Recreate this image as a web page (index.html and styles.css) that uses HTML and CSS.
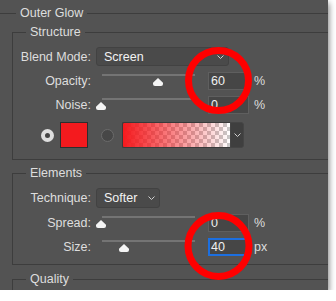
FILE: index.html
```html
<!DOCTYPE html>
<html lang="en">
<head>
  <meta charset="UTF-8" />
  <meta name="viewport" content="width=device-width, initial-scale=1.0" />
  <title>Outer Glow</title>
  <link rel="stylesheet" href="styles.css">
</head>
<body>

  <div class="panel">
    <fieldset class="outer">
      <legend>Outer Glow</legend>

      <fieldset class="group structure">
        <legend>Structure</legend>

        <div class="row select-row">
          <span class="label">Blend Mode:</span>
          <div class="select blend">
            <span>Screen</span>
            <svg class="chevron" width="7" height="4" viewBox="0 0 7 4"><polyline points="0.5,0.5 3.5,3.5 6.5,0.5" /></svg>
          </div>
        </div>

        <div class="row">
          <span class="label">Opacity:</span>
          <div class="slider"><span class="thumb" style="left: 51px"></span></div>
          <div class="num">60</div>
          <span class="unit">%</span>
        </div>

        <div class="row">
          <span class="label">Noise:</span>
          <div class="slider"><span class="thumb" style="left: -6px"></span></div>
          <div class="num">0</div>
          <span class="unit">%</span>
        </div>

        <div class="color-row">
          <span class="radio checked"></span>
          <span class="swatch"></span>
          <span class="radio"></span>
          <div class="gradient">
            <span class="ramp"></span>
            <span class="ramp-btn">
              <svg class="chevron" width="7" height="4" viewBox="0 0 7 4"><polyline points="0.5,0.5 3.5,3.5 6.5,0.5" /></svg>
            </span>
          </div>
        </div>
      </fieldset>

      <fieldset class="group elements">
        <legend>Elements</legend>

        <div class="row select-row">
          <span class="label">Technique:</span>
          <div class="select technique">
            <span>Softer</span>
            <svg class="chevron" width="7" height="4" viewBox="0 0 7 4"><polyline points="0.5,0.5 3.5,3.5 6.5,0.5" /></svg>
          </div>
        </div>

        <div class="row">
          <span class="label">Spread:</span>
          <div class="slider"><span class="thumb" style="left: -6px"></span></div>
          <div class="num">0</div>
          <span class="unit">%</span>
        </div>

        <div class="row">
          <span class="label">Size:</span>
          <div class="slider"><span class="thumb" style="left: 17px"></span></div>
          <div class="num focus">40</div>
          <span class="unit">px</span>
        </div>
      </fieldset>

      <fieldset class="group quality">
        <legend>Quality</legend>
      </fieldset>
    </fieldset>
  </div>

  <!-- red markers drawn over the settings -->
  <svg class="marks" width="336" height="301" viewBox="0 0 336 301">
    <circle cx="218.5" cy="80.5" r="30" />
    <circle cx="218.5" cy="246" r="30.5" />
  </svg>

</body>
</html>
```

FILE: styles.css
```css
:root {
  --panel: #535353;
  --line: #3d3d3d;
  --text: #dedede;
  --field: #464646;
}

body {
  margin: 0;
  position: relative;
  background-color: #fff;
  font-family: "Liberation Sans", Arial, sans-serif;
  font-size: 12.5px;
  color: var(--text);
}

.panel {
  width: 328px;
  height: 290px;
  box-sizing: border-box;
  padding-top: 6px;
  background-color: var(--panel);
  overflow: hidden;
  box-shadow: 1px 3px 6px rgba(0, 0, 0, 0.5);
}

fieldset {
  margin: 0;
  padding: 0;
  min-width: 0;
  border: 1px solid var(--line);
}

legend {
  padding: 0 4px;
  line-height: 14px;
}

.outer {
  margin: 0 -10px;
}

.outer > legend {
  margin-left: 25px;
}

.group {
  margin: 5px -20px 0 21px;
  padding: 8px 0 11px;
}

.group > legend {
  margin-left: 13px;
}

.elements {
  margin-top: 6px;
  padding-bottom: 8px;
}

.quality {
  margin-top: 7px;
  height: 40px;
}

.row {
  display: flex;
  align-items: center;
  height: 18px;
  margin-top: 6px;
}

.select-row {
  margin-top: 0;
  height: 19px;
}

.elements .select-row {
  height: 20px;
}

.label {
  width: 78px;
  margin-right: 5px;
  text-align: right;
}

.select {
  display: flex;
  align-items: center;
  justify-content: space-between;
  height: 100%;
  box-sizing: border-box;
  padding: 0 4px 0 7px;
  border: 1px solid #424242;
  border-radius: 3px;
  background-color: #4a4a4a;
  color: #f2f2f2;
}

.blend { width: 133px; }
.technique { width: 64px; }

.chevron {
  fill: none;
  stroke: #cfcfcf;
  stroke-width: 1;
}

.slider {
  position: relative;
  width: 93px;
  height: 18px;
  margin-left: 6px;
}

.slider::before {
  content: "";
  position: absolute;
  left: 0;
  right: 0;
  top: 2px;
  height: 2px;
  background-color: #747474;
}

.thumb {
  position: absolute;
  top: 6px;
  width: 10px;
  height: 8px;
  background-color: #f4f4f4;
  clip-path: polygon(50% 0, 100% 60%, 100% 100%, 0 100%, 0 60%);
  border-radius: 2px;
}

.num {
  width: 41px;
  height: 18px;
  box-sizing: border-box;
  margin-left: 13px;
  padding-left: 2px;
  border: 1px solid #5f5f5f;
  background-color: var(--field);
  color: #f0f0f0;
  line-height: 16px;
}

.num.focus {
  border: 2px solid #1c6fe0;
  padding-left: 1px;
  line-height: 14px;
}

.unit {
  margin-left: 5px;
}

.color-row {
  display: flex;
  align-items: center;
  height: 26px;
  margin-top: 8px;
  padding-left: 28px;
}

.radio {
  width: 13px;
  height: 13px;
  box-sizing: border-box;
  border-radius: 50%;
  border: 1px solid #6b6b6b;
  background-color: #474747;
}

.radio.checked {
  border: 4.5px solid #dedede;
  background-color: #444;
}

.swatch {
  width: 28px;
  height: 26px;
  box-sizing: border-box;
  margin-left: 6px;
  border: 1px solid #2e2e2e;
  background-color: #f41a1e;
}

.swatch + .radio {
  margin-left: 13px;
}

.gradient {
  display: flex;
  height: 26px;
  margin-left: 8px;
}

.ramp {
  width: 108px;
  box-sizing: border-box;
  border: 1px solid #3a3a3a;
  border-right: none;
  border-radius: 2px 0 0 2px;
  background-image:
    linear-gradient(to right, rgba(245, 26, 30, 1), rgba(245, 26, 30, 0)),
    conic-gradient(#c8c8c8 90deg, #fff 90deg 180deg, #c8c8c8 180deg 270deg, #fff 270deg);
  background-size: 100% 100%, 8px 8px;
}

.ramp-btn {
  display: flex;
  align-items: center;
  justify-content: center;
  width: 14px;
  box-sizing: border-box;
  border: 1px solid #454545;
  border-radius: 0 3px 3px 0;
  background-color: #3f3f3f;
}

.marks {
  position: absolute;
  left: 0;
  top: 0;
  pointer-events: none;
}

.marks circle {
  fill: none;
  stroke: #f00;
  stroke-width: 7;
}
```
